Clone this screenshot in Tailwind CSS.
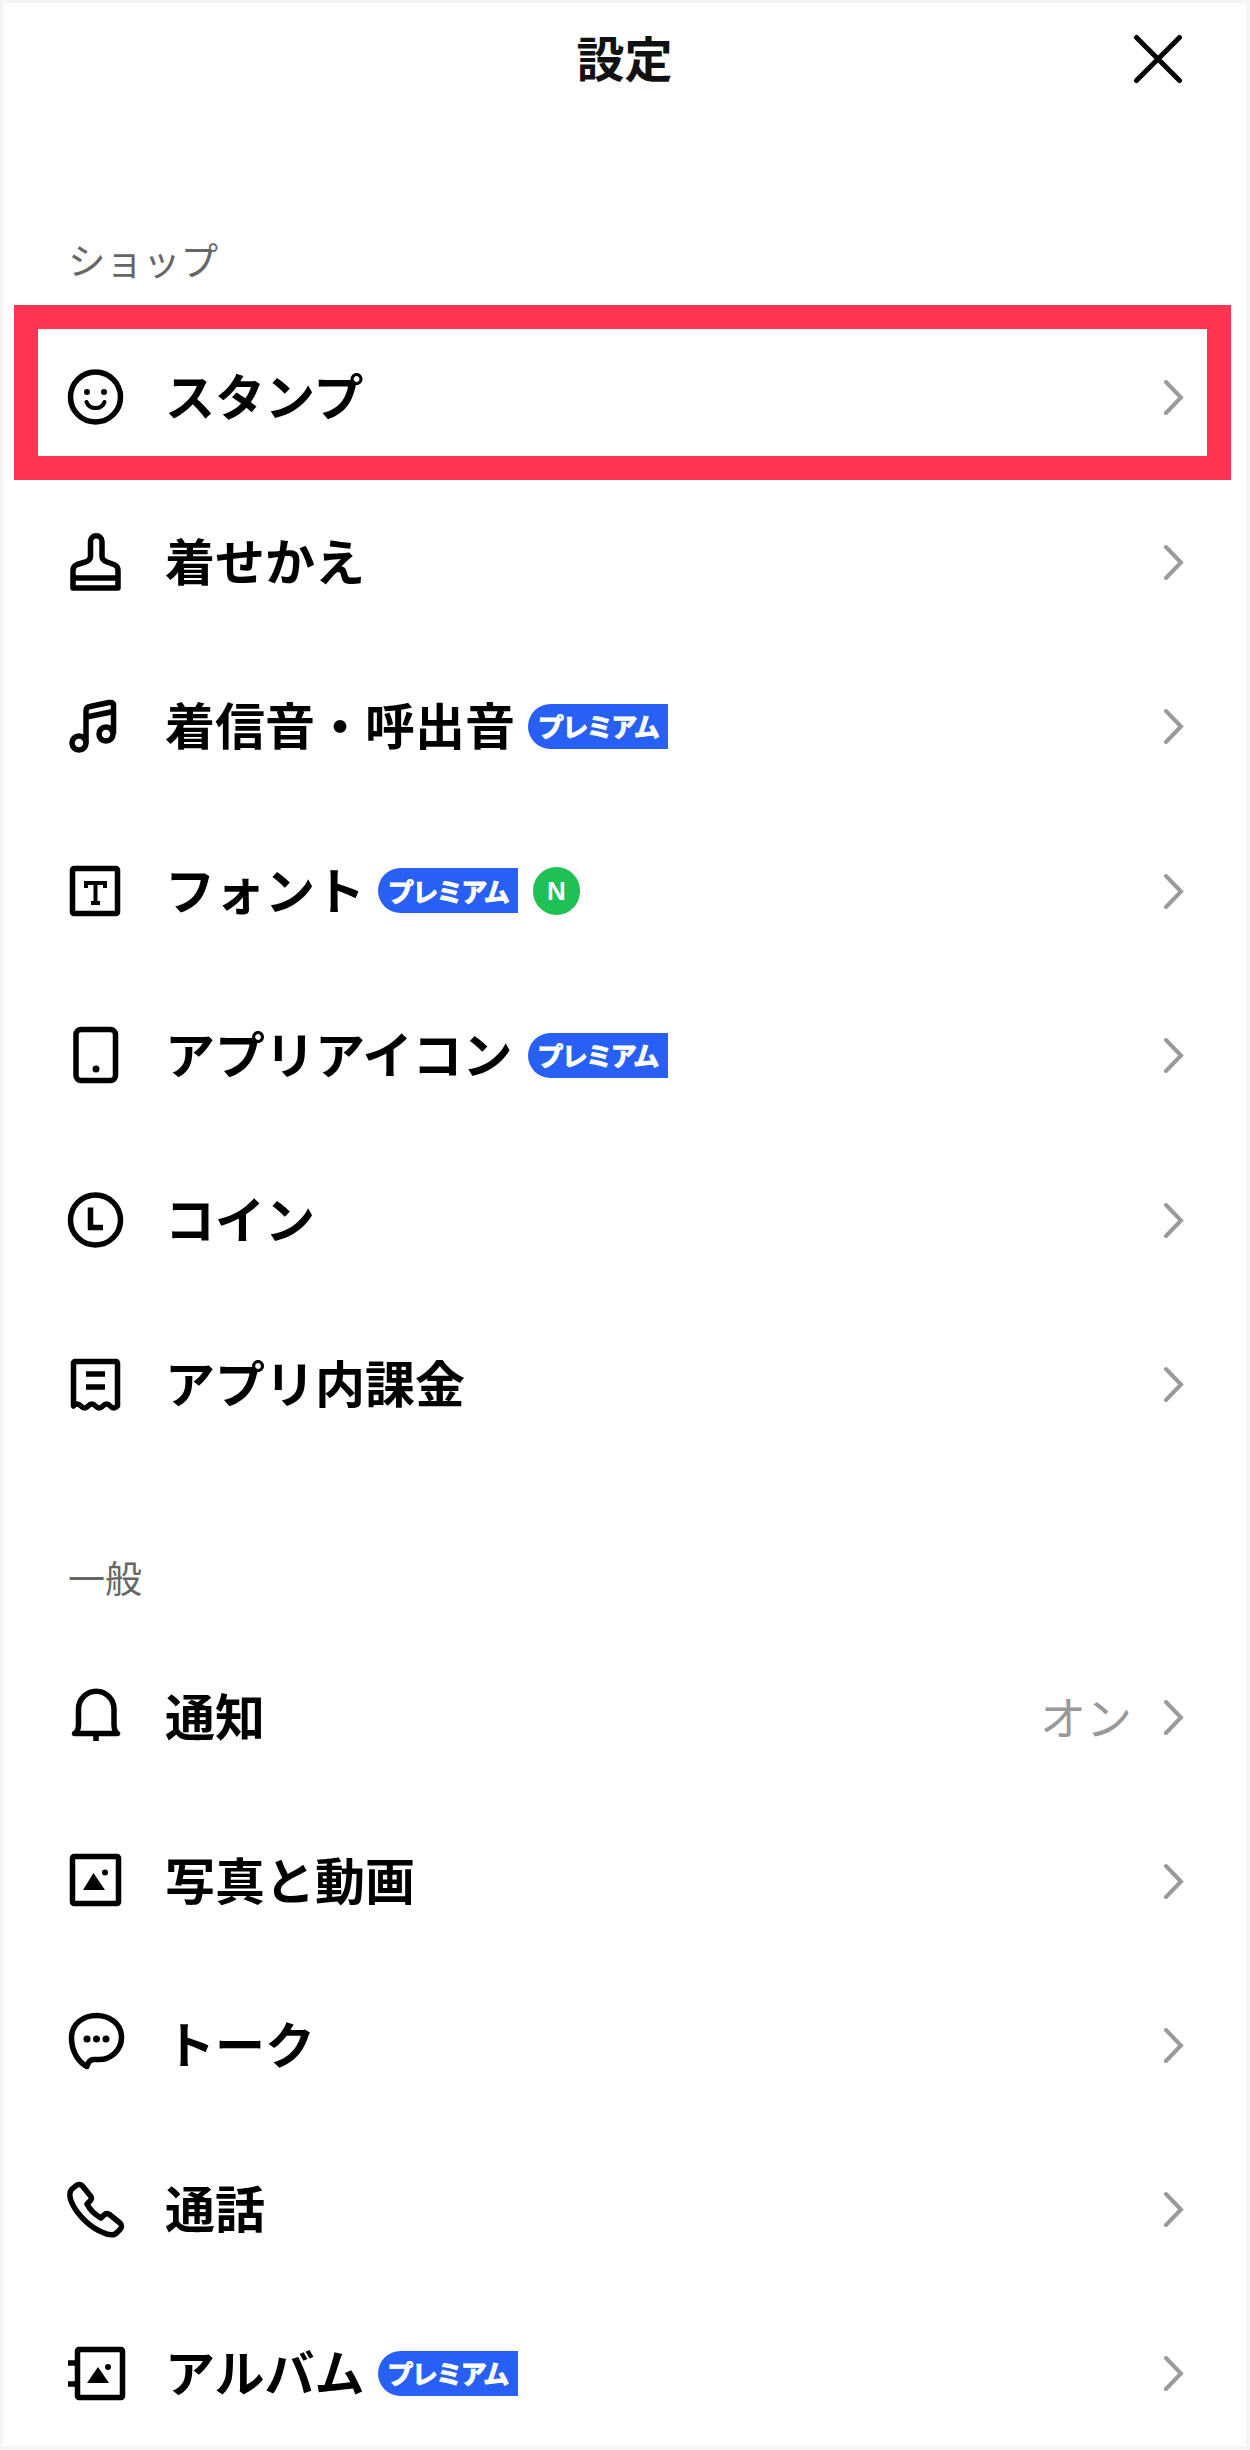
<!DOCTYPE html>
<html lang="ja">
<head>
    <meta charset="UTF-8">
    <meta name="viewport" content="width=device-width, initial-scale=1.0">
    <title>設定</title>
    <script src="https://cdn.jsdelivr.net/npm/@tailwindcss/browser@4"></script>
</head>
<body class="bg-white">
    <div class="w-[1250px] h-[2450px] overflow-hidden bg-white border-t-[3px] border-l-[3px] border-r-4 border-b-4 border-[#f5f5f5] text-black font-['Noto_Sans_CJK_JP','Noto_Sans',sans-serif]">

        <!-- header -->
        <header class="h-[112px] grid grid-cols-[1fr_auto_1fr] items-center">
            <div></div>
            <h1 class="mb-[6px] text-[48px] leading-none font-semibold text-[#111]">設定</h1>
            <div class="flex justify-end pr-[63px]">
                <svg class="w-[50px] h-[50px]" viewBox="0 0 50 50" fill="none" stroke="#000" stroke-width="5" stroke-linecap="round"><path d="M3.5 3.5 46.5 46.5M46.5 3.5 3.5 46.5"/></svg>
            </div>
        </header>

        <!-- shop -->
        <h2 class="mt-[115px] mb-[25px] h-[60px] pb-[2px] pl-[65px] flex items-center text-[37.5px] leading-none text-[#666]">ショップ</h2>
        <ul>
            <li class="relative h-[164.5px] flex items-center pl-[63px] pr-[60px]">
                <svg class="w-[60px] h-[60px] shrink-0" viewBox="0 0 60 60" fill="none" stroke="#000" stroke-width="5.5"><circle cx="29.5" cy="30" r="25"/><circle cx="21" cy="25" r="3" fill="#000" stroke="none"/><circle cx="38" cy="25" r="3" fill="#000" stroke="none"/><path stroke-width="4" stroke-linecap="round" d="M20.5 35a9.5 9 0 0 0 18 0"/></svg>
                <span class="ml-[39px] mb-[6px] text-[50px] leading-none font-semibold">スタンプ</span>
                <svg class="ml-auto w-[24px] h-[36px]" viewBox="0 0 24 36" fill="none" stroke="#9a9a9a" stroke-width="4" stroke-linecap="round"><path d="M4 3 19 18.5 4 34"/></svg>
                <div class="absolute top-[-10px] bottom-0 left-[11px] right-[15px] border-[24px] border-[#ff3450]"></div>
            </li>
            <li class="h-[164.5px] flex items-center pl-[63px] pr-[60px]">
                <svg class="w-[60px] h-[60px] shrink-0" viewBox="0 0 60 60" fill="none" stroke="#000" stroke-width="5.5" stroke-linejoin="round"><path d="M24.5 24V9.5a5.75 5.75 0 0 1 11.5 0V24c0 3 2 5 5 6l7 2.5c2.5 1 4 3 4 6V56H7V38.5c0-3 1.5-5 4-6l8.5-2.5c3-1 5-3 5-6z"/><path d="M7 46h45"/></svg>
                <span class="ml-[39px] mb-[6px] text-[50px] leading-none font-semibold">着せかえ</span>
                <svg class="ml-auto w-[24px] h-[36px]" viewBox="0 0 24 36" fill="none" stroke="#9a9a9a" stroke-width="4" stroke-linecap="round"><path d="M4 3 19 18.5 4 34"/></svg>
            </li>
            <li class="h-[164.5px] flex items-center pl-[63px] pr-[60px]">
                <svg class="w-[60px] h-[60px] shrink-0" viewBox="0 0 60 60" fill="none" stroke="#000" stroke-width="5.5"><circle cx="13" cy="47" r="7"/><circle cx="40" cy="38" r="7"/><path d="M20 47V15c0-2 1-4 4-4.5l19-4c3-.5 4.5.5 4.5 3V38"/><path d="M20.5 21l27-5.5"/></svg>
                <span class="ml-[39px] mb-[6px] text-[50px] leading-none font-semibold">着信音・呼出音</span>
                <span class="ml-[13px] w-[140px] h-[45px] flex items-center justify-center rounded-l-full rounded-tr-[22px] bg-[#2860f6] text-white text-[26px] tracking-[-1.5px] leading-none font-bold [-webkit-text-stroke:1px_white]">プレミアム</span>
                <svg class="ml-auto w-[24px] h-[36px]" viewBox="0 0 24 36" fill="none" stroke="#9a9a9a" stroke-width="4" stroke-linecap="round"><path d="M4 3 19 18.5 4 34"/></svg>
            </li>
            <li class="h-[164.5px] flex items-center pl-[63px] pr-[60px]">
                <svg class="w-[60px] h-[60px] shrink-0" viewBox="0 0 60 60" fill="none" stroke="#000" stroke-width="5.5"><rect x="6.5" y="7.5" width="45" height="45" rx="1.5"/><path stroke-width="4" d="M29.5 22v20M25 42h9M20 27v-5h19v5"/></svg>
                <span class="ml-[39px] mb-[6px] text-[50px] leading-none font-semibold">フォント</span>
                <span class="ml-[13px] w-[140px] h-[45px] flex items-center justify-center rounded-l-full rounded-tr-[22px] bg-[#2860f6] text-white text-[26px] tracking-[-1.5px] leading-none font-bold [-webkit-text-stroke:1px_white]">プレミアム</span>
                <span class="ml-[15px] w-[47px] h-[48px] flex items-center justify-center rounded-full bg-[#1fc155] text-white text-[26px] leading-none font-bold font-['Liberation_Sans',sans-serif]">N</span>
                <svg class="ml-auto w-[24px] h-[36px]" viewBox="0 0 24 36" fill="none" stroke="#9a9a9a" stroke-width="4" stroke-linecap="round"><path d="M4 3 19 18.5 4 34"/></svg>
            </li>
            <li class="h-[164.5px] flex items-center pl-[63px] pr-[60px]">
                <svg class="w-[60px] h-[60px] shrink-0" viewBox="0 0 60 60" fill="none" stroke="#000" stroke-width="5.5"><rect x="10" y="4.5" width="39.5" height="51" rx="5"/><circle cx="30" cy="44" r="3.5" fill="#000" stroke="none"/></svg>
                <span class="ml-[39px] mb-[6px] text-[50px] leading-none font-semibold">アプリアイコン</span>
                <span class="ml-[15px] w-[140px] h-[45px] flex items-center justify-center rounded-l-full rounded-tr-[22px] bg-[#2860f6] text-white text-[26px] tracking-[-1.5px] leading-none font-bold [-webkit-text-stroke:1px_white]">プレミアム</span>
                <svg class="ml-auto w-[24px] h-[36px]" viewBox="0 0 24 36" fill="none" stroke="#9a9a9a" stroke-width="4" stroke-linecap="round"><path d="M4 3 19 18.5 4 34"/></svg>
            </li>
            <li class="h-[164.5px] flex items-center pl-[63px] pr-[60px]">
                <svg class="w-[60px] h-[60px] shrink-0" viewBox="0 0 60 60" fill="none" stroke="#000" stroke-width="5.5"><circle cx="29.5" cy="30" r="25"/><path d="M24.5 17.5V37.5H37"/></svg>
                <span class="ml-[39px] mb-[6px] text-[50px] leading-none font-semibold">コイン</span>
                <svg class="ml-auto w-[24px] h-[36px]" viewBox="0 0 24 36" fill="none" stroke="#9a9a9a" stroke-width="4" stroke-linecap="round"><path d="M4 3 19 18.5 4 34"/></svg>
            </li>
            <li class="h-[164.5px] flex items-center pl-[63px] pr-[60px]">
                <svg class="w-[60px] h-[60px] shrink-0" viewBox="0 0 60 60" fill="none" stroke="#000" stroke-width="5.5"><path d="M7.5 52V9A1.5 1.5 0 0 1 9 7.5h41A1.5 1.5 0 0 1 51.5 9V52q-3.7 4-7.3 0t-7.3 0-7.4 0-7.3 0-7.3 0-7.4 0z" stroke-linejoin="round"/><path d="M20 20h19M20 33h19"/></svg>
                <span class="ml-[39px] mb-[6px] text-[50px] leading-none font-semibold">アプリ内課金</span>
                <svg class="ml-auto w-[24px] h-[36px]" viewBox="0 0 24 36" fill="none" stroke="#9a9a9a" stroke-width="4" stroke-linecap="round"><path d="M4 3 19 18.5 4 34"/></svg>
            </li>
        </ul>

        <!-- general -->
        <h2 class="mt-[81.5px] mb-[27px] h-[60px] pb-[2px] pl-[65px] flex items-center text-[37px] leading-none text-[#666]">一般</h2>
        <ul>
            <li class="h-[164px] flex items-center pl-[63px] pr-[60px]">
                <svg class="w-[60px] h-[60px] shrink-0" viewBox="0 0 60 60" fill="none" stroke="#000" stroke-width="5.5" stroke-linejoin="round"><path d="M8.5 46.5c3-1.5 4-5 4-9V22a17.75 17.75 0 0 1 35.5 0V37.5c0 4 1 7.5 3.5 9z"/><path d="M30 47v7"/></svg>
                <span class="ml-[39px] mb-[6px] text-[50px] leading-none font-semibold">通知</span>
                <span class="ml-auto mr-[30px] mb-[5px] text-[46px] leading-none text-[#999]">オン</span>
                <svg class="w-[24px] h-[36px]" viewBox="0 0 24 36" fill="none" stroke="#9a9a9a" stroke-width="4" stroke-linecap="round"><path d="M4 3 19 18.5 4 34"/></svg>
            </li>
            <li class="h-[164px] flex items-center pl-[63px] pr-[60px]">
                <svg class="w-[60px] h-[60px] shrink-0" viewBox="0 0 60 60" fill="none" stroke="#000" stroke-width="5.5"><rect x="6.5" y="5.5" width="46" height="47" rx="1.5"/><path fill="#000" stroke="none" d="M27.5 22 39 39H17z"/><circle cx="39" cy="21.5" r="3" fill="#000" stroke="none"/></svg>
                <span class="ml-[39px] mb-[6px] text-[50px] leading-none font-semibold">写真と動画</span>
                <svg class="ml-auto w-[24px] h-[36px]" viewBox="0 0 24 36" fill="none" stroke="#9a9a9a" stroke-width="4" stroke-linecap="round"><path d="M4 3 19 18.5 4 34"/></svg>
            </li>
            <li class="h-[164px] flex items-center pl-[63px] pr-[60px]">
                <svg class="w-[60px] h-[60px] shrink-0 overflow-visible" viewBox="0 4 60 60" fill="none" stroke="#000" stroke-width="5.5" stroke-linejoin="round"><path d="M30.5 4.5C44 4.5 55.5 13 55.5 26.5C55.5 39 45 48.5 33 48.5H28C24 48.5 22 51 21 55.5C12 51 5.5 40 5.5 27C5.5 13 17 4.5 30.5 4.5z"/><circle cx="21" cy="28" r="3.5" fill="#000" stroke="none"/><circle cx="30.5" cy="28" r="3.5" fill="#000" stroke="none"/><circle cx="40" cy="28" r="3.5" fill="#000" stroke="none"/></svg>
                <span class="ml-[39px] mb-[6px] text-[50px] leading-none font-semibold">トーク</span>
                <svg class="ml-auto w-[24px] h-[36px]" viewBox="0 0 24 36" fill="none" stroke="#9a9a9a" stroke-width="4" stroke-linecap="round"><path d="M4 3 19 18.5 4 34"/></svg>
            </li>
            <li class="h-[164px] flex items-center pl-[63px] pr-[60px]">
                <svg class="w-[60px] h-[60px] shrink-0" viewBox="0 0 60 60" fill="none" stroke="#000" stroke-width="5.5" stroke-linejoin="round"><path d="M9 7.5c2-2 5-3 7.5-.5l8 10c1.5 2 1 3.5-.5 5l-3 3c3 6 7 10 14 14l3-3c1.5-1.5 3.5-2 5.5-.5l10.5 8.5c2 2 2 4.5 0 6.5l-3 3c-3 3-8 3-14 0C25 49 11 36 5.5 23c-2-5-2-10 0-12.5z"/></svg>
                <span class="ml-[39px] mb-[6px] text-[50px] leading-none font-semibold">通話</span>
                <svg class="ml-auto w-[24px] h-[36px]" viewBox="0 0 24 36" fill="none" stroke="#9a9a9a" stroke-width="4" stroke-linecap="round"><path d="M4 3 19 18.5 4 34"/></svg>
            </li>
            <li class="h-[164px] flex items-center pl-[63px] pr-[60px]">
                <svg class="w-[60px] h-[60px] shrink-0" viewBox="0 0 60 60" fill="none" stroke="#000" stroke-width="5.5"><rect x="11.5" y="6.5" width="45" height="48" rx="1.5"/><path d="M2 20h8M2 41h8"/><path fill="#000" stroke="none" d="M32 24 43 40H21z"/><circle cx="42" cy="24" r="3" fill="#000" stroke="none"/></svg>
                <span class="ml-[39px] mb-[6px] text-[50px] leading-none font-semibold">アルバム</span>
                <span class="ml-[13px] w-[140px] h-[45px] flex items-center justify-center rounded-l-full rounded-tr-[22px] bg-[#2860f6] text-white text-[26px] tracking-[-1.5px] leading-none font-bold [-webkit-text-stroke:1px_white]">プレミアム</span>
                <svg class="ml-auto w-[24px] h-[36px]" viewBox="0 0 24 36" fill="none" stroke="#9a9a9a" stroke-width="4" stroke-linecap="round"><path d="M4 3 19 18.5 4 34"/></svg>
            </li>
        </ul>
    </div>
</body>
</html>
